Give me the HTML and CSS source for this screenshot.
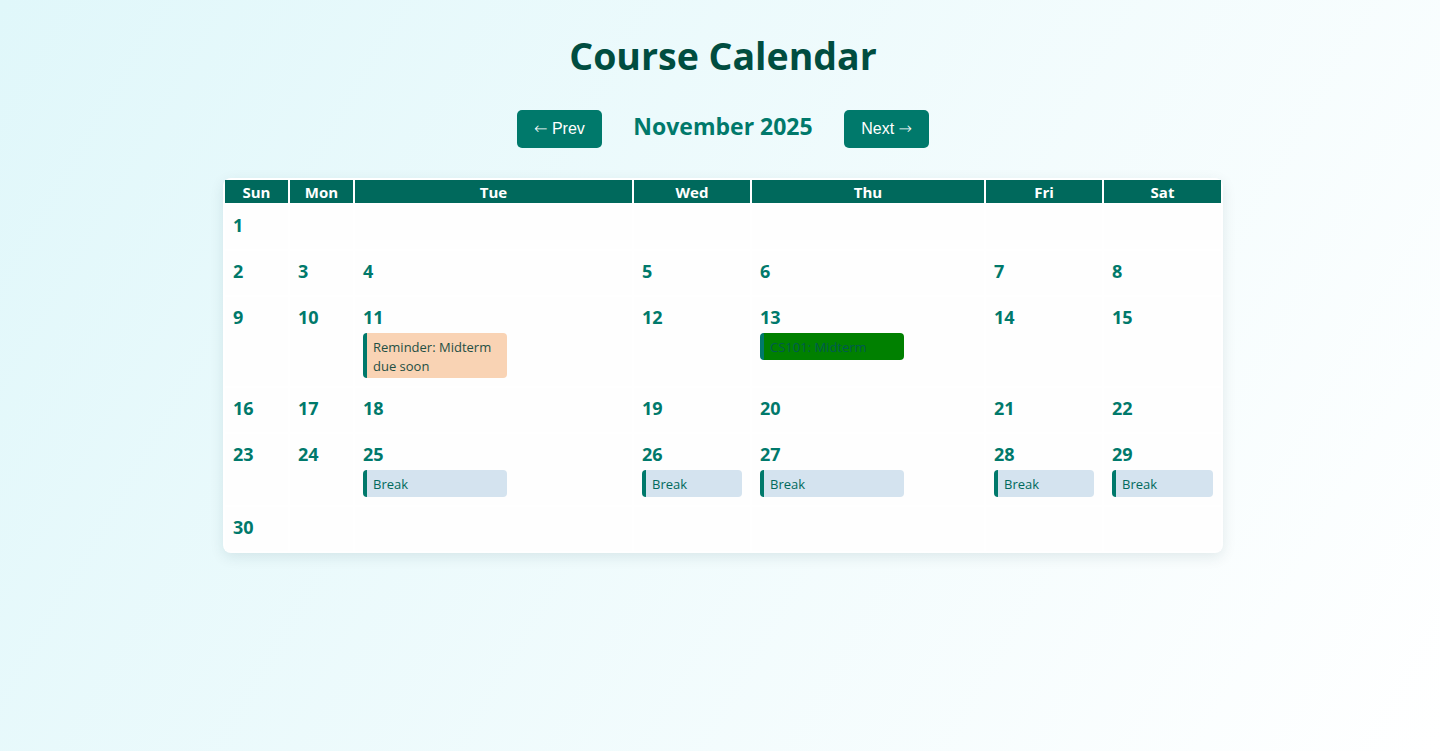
FILE: index.html
```html
<!DOCTYPE html>
<html lang="en">
<head>
<meta charset="utf-8">
<title>Course Calendar</title>
<link rel="stylesheet" href="styles.css">
</head>
<body>
<div class="page">
  <h1 class="title">Course Calendar</h1>
  <div class="nav">
    <button class="nav-btn"><span class="arrow">←</span> Prev</button>
    <h2 class="month">November 2025</h2>
    <button class="nav-btn">Next <span class="arrow">→</span></button>
  </div>
  <table class="calendar">
    <colgroup>
      <col class="c-sun"><col class="c-mon"><col class="c-tue"><col class="c-wed"><col class="c-thu"><col class="c-fri"><col class="c-sat">
    </colgroup>
    <thead>
      <tr><th>Sun</th><th>Mon</th><th>Tue</th><th>Wed</th><th>Thu</th><th>Fri</th><th>Sat</th></tr>
    </thead>
    <tbody>
      <tr>
        <td><div class="day">1</div></td><td></td><td></td><td></td><td></td><td></td><td></td>
      </tr>
      <tr>
        <td><div class="day">2</div></td><td><div class="day">3</div></td><td><div class="day">4</div></td><td><div class="day">5</div></td><td><div class="day">6</div></td><td><div class="day">7</div></td><td><div class="day">8</div></td>
      </tr>
      <tr>
        <td><div class="day">9</div></td>
        <td><div class="day">10</div></td>
        <td><div class="day">11</div><div class="event event-reminder">Reminder: Midterm due soon</div></td>
        <td><div class="day">12</div></td>
        <td><div class="day">13</div><div class="event event-exam">CS101: Midterm</div></td>
        <td><div class="day">14</div></td>
        <td><div class="day">15</div></td>
      </tr>
      <tr>
        <td><div class="day">16</div></td><td><div class="day">17</div></td><td><div class="day">18</div></td><td><div class="day">19</div></td><td><div class="day">20</div></td><td><div class="day">21</div></td><td><div class="day">22</div></td>
      </tr>
      <tr>
        <td><div class="day">23</div></td>
        <td><div class="day">24</div></td>
        <td><div class="day">25</div><div class="event event-break">Break</div></td>
        <td><div class="day">26</div><div class="event event-break">Break</div></td>
        <td><div class="day">27</div><div class="event event-break">Break</div></td>
        <td><div class="day">28</div><div class="event event-break">Break</div></td>
        <td><div class="day">29</div><div class="event event-break">Break</div></td>
      </tr>
      <tr>
        <td><div class="day">30</div></td><td></td><td></td><td></td><td></td><td></td><td></td>
      </tr>
    </tbody>
  </table>
</div>
</body>
</html>
```
FILE: styles.css
```css
* { box-sizing: border-box; }

html, body {
  margin: 0;
  min-height: 100%;
}

body {
  background: linear-gradient(120deg, #e0f7fa 0%, #ffffff 100%);
  min-height: 751px;
  font-family: "Open Sans", "Noto Sans", sans-serif;
  color: #004d40;
}

.page {
  padding: 33px 0 40px 6px;
  display: flex;
  flex-direction: column;
  align-items: center;
}

.title {
  margin: 0;
  font-size: 37.5px;
  line-height: 45px;
  font-weight: 700;
  color: #004d40;
}

.nav {
  margin-top: 32px;
  display: flex;
  align-items: center;
  gap: 31px;
}

.nav-btn {
  background: #00796b;
  color: #ffffff;
  border: none;
  border-radius: 5px;
  font-family: "Liberation Sans", Arial, sans-serif;
  font-size: 16px;
  line-height: 18px;
  padding: 10px 17.5px;
}

.arrow {
  font-family: "DejaVu Sans", sans-serif;
  font-size: 16px;
  font-weight: 300;
}

.month {
  margin: 0 0 6px;
  font-size: 23px;
  line-height: 28px;
  font-weight: 700;
  color: #00796b;
}

.calendar {
  margin-top: 30px;
  width: 1000px;
  border-collapse: separate;
  border-spacing: 2px;
  table-layout: fixed;
  background: #ffffff;
  border-radius: 8px;
  box-shadow: 0 4px 14px rgba(0, 60, 70, 0.1);
}

.c-sun, .c-mon { width: 63px; }
.c-tue { width: 277px; }
.c-wed { width: 116px; }
.c-thu { width: 232px; }
.c-fri { width: 116px; }
.c-sat { width: 117px; }

.calendar th {
  background: #00695c;
  color: #ffffff;
  font-size: 15px;
  font-weight: 700;
  line-height: 19px;
  padding: 3px 0 1px;
  text-align: center;
}

.calendar td {
  vertical-align: top;
  padding: 8px;
  background: #fefefe;
}

.day {
  font-size: 18px;
  line-height: 24px;
  font-weight: 700;
  color: #00796b;
  margin-bottom: 4px;
}

.event {
  max-width: 144px;
  font-size: 13px;
  line-height: 18.5px;
  padding: 5px 6px 3px;
  border-left: 4px solid #00796b;
  border-radius: 4px;
  color: #00695c;
}

.event-reminder { background: #f9d3b4; color: #1f4f44; }
.event-exam { background: #008000; color: #005a4f; }
.event-break { background: #d4e3ef; color: #00695c; }
```
